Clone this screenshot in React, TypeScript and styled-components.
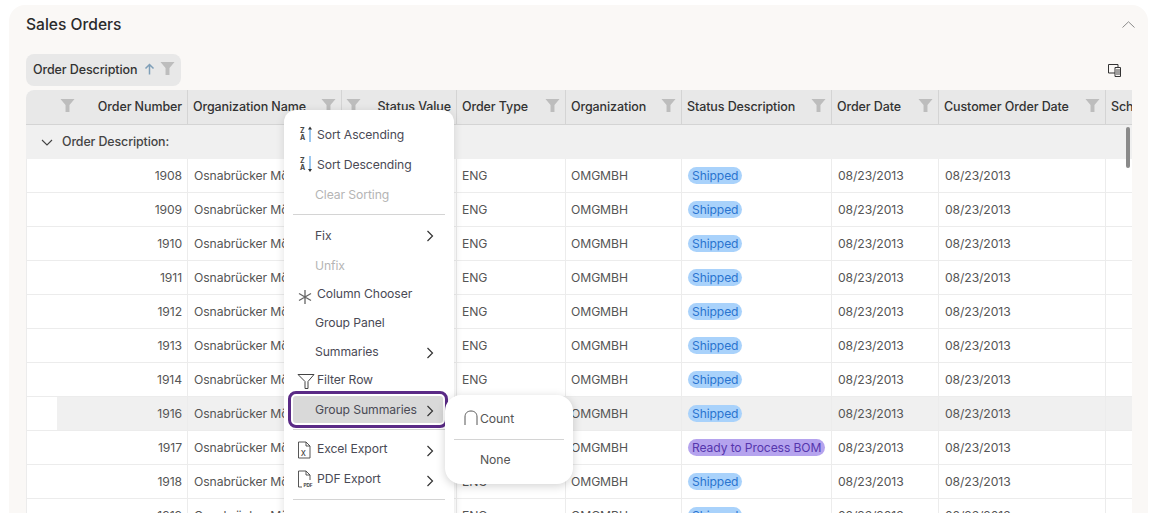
import React from 'react';
import styled, { createGlobalStyle } from 'styled-components';

const GlobalStyle = createGlobalStyle`
  html, body {
    margin: 0;
    height: 513px;
    overflow: hidden;
    background: #fff;
    font-family: Inter, "Liberation Sans", sans-serif;
  }
  * { box-sizing: border-box; }
`;

const COLUMNS = '162px 154px 115px 109px 116px 150px 107px 167px 60px';

const Page = styled.div`
  position: relative;
  width: 1149px;
  height: 513px;
  overflow: hidden;
  padding: 5px 0 0 9px;
`;

const Panel = styled.section`
  width: 1139px;
  height: 520px;
  background: #faf8f6;
  border-radius: 16px 16px 0 0;
  padding: 0 16px 0 17px;
`;

const PanelHeader = styled.header`
  height: 49px;
  padding-bottom: 10px;
  display: flex;
  align-items: center;
  justify-content: space-between;
`;

const Title = styled.h2`
  margin: 0;
  font-size: 15.6px;
  font-weight: 500;
  color: #2b2b2b;
`;

const Collapse = styled.svg`
  width: 13px;
  height: 7px;
  margin-right: -3px;
  margin-top: -1px;
`;

const Toolbar = styled.div`
  height: 36px;
  display: flex;
  align-items: flex-start;
  justify-content: space-between;
`;

const GroupChip = styled.div`
  width: 155px;
  height: 32px;
  background: #e8e8e8;
  border-radius: 8px;
  padding: 0 6px 2px 7px;
  display: flex;
  align-items: center;
  font-size: 12.5px;
  font-weight: 500;
  letter-spacing: -0.1px;
  color: #333;
`;

const ChipLabel = styled.span`
  flex: 1;
  white-space: nowrap;
`;

const ChooserIcon = styled.svg`
  width: 13px;
  height: 13px;
  margin: 10px 11px 0 0;
`;

const Grid = styled.div`
  position: relative;
  width: 1106px;
  height: 430px;
  overflow: hidden;
  border-radius: 8px 0 0 0;
  background: #fff;
`;

const HeaderRow = styled.div`
  display: grid;
  grid-template-columns: ${COLUMNS};
  height: 35px;
  background: #e8e8e8;
  border-bottom: 1px solid #d4d4d4;
`;

const HeaderCell = styled.div<{ $reverse?: boolean; $indent?: number }>`
  display: flex;
  align-items: center;
  justify-content: space-between;
  flex-direction: ${({ $reverse }) => ($reverse ? 'row-reverse' : 'row')};
  padding: 0 5px 2px ${({ $indent }) => $indent ?? 5}px;
  border-right: 1px solid #d4d4d4;
  font-size: 12.5px;
  font-weight: 500;
  letter-spacing: -0.1px;
  color: #333;
  white-space: nowrap;
  overflow: hidden;
`;

const HeaderLabel = styled.span<{ $grow?: boolean }>`
  flex: ${({ $grow }) => ($grow ? 1 : 'none')};
`;

const Funnel = styled.svg`
  flex: none;
  width: 15px;
  height: 15px;
  margin-top: -2px;
`;

const ChipSort = styled.svg`
  flex: none;
  width: 11px;
  height: 12px;
  margin-right: 5px;
`;

const GroupRow = styled.div`
  height: 34px;
  background: #f0f0f0;
  display: flex;
  align-items: center;
  gap: 9px;
  padding: 0 0 2px 15px;
  font-size: 12.4px;
  font-weight: 500;
  letter-spacing: -0.1px;
  color: #444;
`;

const GroupChevron = styled.svg`
  width: 12px;
  height: 7px;
  margin-top: 2px;
`;

const Row = styled.div<{ $hover?: boolean }>`
  display: grid;
  grid-template-columns: ${COLUMNS};
  height: 34px;
  border-bottom: 1px solid #ececec;
  box-shadow: inset 1px 0 #ececec;
  background: ${({ $hover }) =>
    $hover ? 'linear-gradient(90deg, #fff 31px, #f0f0f0 31px)' : '#fff'};
`;

const Cell = styled.div<{ $numeric?: boolean; $tight?: boolean }>`
  display: flex;
  align-items: center;
  justify-content: ${({ $numeric }) => ($numeric ? 'flex-end' : 'flex-start')};
  padding: 0 5px 0 ${({ $tight }) => ($tight ? 5 : 6)}px;
  border-right: 1px solid #ececec;
  font-size: 12.2px;
  letter-spacing: -0.1px;
  color: #555;
  white-space: nowrap;
  overflow: hidden;
`;

const StatusPill = styled.span<{ $tone: 'blue' | 'purple' }>`
  height: 17px;
  line-height: 17px;
  padding: 0 4px;
  border-radius: 9px;
  font-size: 12.1px;
  letter-spacing: -0.1px;
  background: ${({ $tone }) => ($tone === 'blue' ? '#a9d2fb' : '#b5a3ee')};
  color: ${({ $tone }) => ($tone === 'blue' ? '#2a74cf' : '#5636ad')};
`;

const ScrollThumb = styled.div`
  position: absolute;
  top: 37px;
  right: 2px;
  width: 4px;
  height: 41px;
  border-radius: 2px;
  background: #8a8a8a;
`;

const Menu = styled.div`
  position: absolute;
  left: 284px;
  top: 110px;
  width: 170px;
  height: 420px;
  background: #fff;
  border-radius: 12px;
  padding: 9px 0 0;
  box-shadow: 0 2px 10px rgba(0, 0, 0, 0.12);
`;

const MenuItem = styled.div<{ $h?: number; $disabled?: boolean; $plain?: boolean }>`
  height: ${({ $h }) => $h ?? 30}px;
  display: flex;
  align-items: center;
  position: relative;
  padding-left: ${({ $plain }) => ($plain ? 31 : 33)}px;
  font-size: 12.2px;
  letter-spacing: -0.1px;
  color: ${({ $disabled }) => ($disabled ? '#b5b5b5' : '#4a4a55')};
  white-space: nowrap;
`;

const FocusedItem = styled(MenuItem)`
  margin: 3px 11px 0 9px;
  padding-left: 22px;
  height: 27px;
  border-radius: 3px;
  background: #d9d9d9;
  outline: 3px solid #5a2a86;
  outline-offset: 2px;
`;

const ItemIcon = styled.svg<{ $dy?: number }>`
  position: absolute;
  left: 13px;
  top: calc(50% + ${({ $dy }) => $dy ?? 0}px);
  transform: translateY(-50%);
  width: 18px;
  height: 18px;
`;

const Caret = styled.svg<{ $right?: number; $dy?: number }>`
  position: absolute;
  right: ${({ $right }) => $right ?? 20}px;
  top: calc(50% + ${({ $dy }) => $dy ?? 1}px);
  transform: translateY(-50%);
  width: 8px;
  height: 12px;
`;

const MenuDivider = styled.div<{ $top?: number; $bottom?: number }>`
  height: 1px;
  margin: ${({ $top }) => $top ?? 5}px 9px ${({ $bottom }) => $bottom ?? 5}px;
  background: #d4d4d4;
`;

const SubMenu = styled.div`
  position: absolute;
  left: 445px;
  top: 395px;
  width: 128px;
  height: 89px;
  background: #fff;
  border-radius: 16px;
  padding: 8px 9px 0;
  box-shadow: 0 2px 10px rgba(0, 0, 0, 0.18);
`;

const SubItem = styled.div`
  height: 30px;
  display: flex;
  align-items: center;
  padding-left: 26px;
  position: relative;
  font-size: 12.2px;
  letter-spacing: -0.1px;
  color: #555;
`;

const SubIcon = styled.svg`
  position: absolute;
  left: 10px;
  top: 6px;
  width: 14px;
  height: 18px;
`;

const SubDivider = styled.div`
  height: 1px;
  margin: 6px 0 4px;
  background: #d4d4d4;
`;

const FilterIcon = () => (
  <Funnel viewBox="0 0 15 16">
    <path d="M0 1H15L9.6 7.5V15H5.4V7.5Z" fill="#bdbdbd" />
  </Funnel>
);

const CaretPath = () => (
  <path d="M1.5 1L6.5 6L1.5 11" fill="none" stroke="#333" strokeWidth="1.2" />
);

const SortIcon = ({ up }: { up: boolean }) => (
  <ItemIcon viewBox="0 0 18 18">
    <text x="3" y="7.5" fontSize="7" fontWeight="700" fontFamily="Inter" fill="#444">Z</text>
    <text x="3" y="15" fontSize="7" fontWeight="700" fontFamily="Inter" fill="#444">A</text>
    <path d={up ? 'M13 3V17' : 'M13 1V15'} stroke="#5aa3e6" strokeWidth="1.2" />
    <path d={up ? 'M11 4.5L13 1.5L15 4.5Z' : 'M11 14L13 17L15 14Z'} fill="#333" />
  </ItemIcon>
);

const headers = [
  { label: 'Order Number', numeric: true, indent: 34 },
  { label: 'Organization Name' },
  { label: 'Status Value', numeric: true, indent: 4 },
  { label: 'Order Type' },
  { label: 'Organization' },
  { label: 'Status Description' },
  { label: 'Order Date' },
  { label: 'Customer Order Date' },
  { label: 'Schedule Date', noFilter: true },
];

const orders: { id: number; status?: 'bom'; hover?: boolean }[] = [
  { id: 1908 },
  { id: 1909 },
  { id: 1910 },
  { id: 1911 },
  { id: 1912 },
  { id: 1913 },
  { id: 1914 },
  { id: 1916, hover: true },
  { id: 1917, status: 'bom' },
  { id: 1918 },
  { id: 1919 },
];

export default function App() {
  return (
    <Page>
      <GlobalStyle />
      <Panel>
        <PanelHeader>
          <Title>Sales Orders</Title>
          <Collapse viewBox="0 0 13 7">
            <path d="M.5 6.5L6.5 .8L12.5 6.5" fill="none" stroke="#8a8a8a" strokeWidth="1" />
          </Collapse>
        </PanelHeader>
        <Toolbar>
          <GroupChip>
            <ChipLabel>Order Description</ChipLabel>
            <ChipSort viewBox="0 0 11 12">
              <path d="M5.5 1.5V11.5M1.5 5.5L5.5 1.5L9.5 5.5" fill="none" stroke="#7f9fb8" strokeWidth="1.5" />
            </ChipSort>
            <FilterIcon />
          </GroupChip>
          <ChooserIcon viewBox="0 0 13 13">
            <path d="M.5 .5H10V9H.5Z" fill="none" stroke="#333" strokeWidth="1" />
            <path d="M7 3.5H12.5V12.5H7Z" fill="#faf8f6" stroke="#333" strokeWidth="1" />
            <path d="M8 6H12M8 8H12M8 10H12" stroke="#333" strokeWidth="0.9" />
          </ChooserIcon>
        </Toolbar>
        <Grid>
          <HeaderRow>
            {headers.map((h) => (
              <HeaderCell key={h.label} $reverse={!h.numeric && !h.noFilter} $indent={h.indent}>
                {!h.noFilter && <FilterIcon />}
                <HeaderLabel $grow={!h.numeric}>{h.label}</HeaderLabel>
              </HeaderCell>
            ))}
          </HeaderRow>
          <GroupRow>
            <GroupChevron viewBox="0 0 12 7">
              <path d="M1 1L6 6L11 1" fill="none" stroke="#444" strokeWidth="1.1" />
            </GroupChevron>
            Order Description:
          </GroupRow>
          {orders.map((o) => (
            <Row key={o.id} $hover={o.hover}>
              <Cell $numeric>{o.id}</Cell>
              <Cell>Osnabrücker Möbel</Cell>
              <Cell $numeric />
              <Cell $tight>ENG</Cell>
              <Cell $tight>OMGMBH</Cell>
              <Cell>
                <StatusPill $tone={o.status === 'bom' ? 'purple' : 'blue'}>
                  {o.status === 'bom' ? 'Ready to Process BOM' : 'Shipped'}
                </StatusPill>
              </Cell>
              <Cell>08/23/2013</Cell>
              <Cell>08/23/2013</Cell>
              <Cell />
            </Row>
          ))}
          <ScrollThumb />
        </Grid>
      </Panel>

      <Menu>
        <MenuItem>
          <SortIcon up />
          Sort Ascending
        </MenuItem>
        <MenuItem>
          <SortIcon up={false} />
          Sort Descending
        </MenuItem>
        <MenuItem $disabled $plain>Clear Sorting</MenuItem>
        <MenuDivider />
        <MenuItem $plain>
          Fix
          <Caret viewBox="0 0 8 12"><CaretPath /></Caret>
        </MenuItem>
        <MenuItem $plain $disabled>Unfix</MenuItem>
        <MenuItem $h={27}>
          <ItemIcon $dy={3} viewBox="0 0 18 18">
            <path d="M8 2V16M2 5.5L14 12.5M14 5.5L2 12.5" stroke="#666" strokeWidth="1.3" />
          </ItemIcon>
          Column Chooser
        </MenuItem>
        <MenuItem $plain $h={31}>Group Panel</MenuItem>
        <MenuItem $plain $h={27}>
          Summaries
          <Caret viewBox="0 0 8 12"><CaretPath /></Caret>
        </MenuItem>
        <MenuItem $h={28}>
          <ItemIcon $dy={2} viewBox="0 0 18 18">
            <path d="M1 2.5H17L11 9.5V16.5H8V9.5Z" fill="none" stroke="#444" strokeWidth="1" />
          </ItemIcon>
          Filter Row
        </MenuItem>
        <FocusedItem>
          Group Summaries
          <Caret $right={9} viewBox="0 0 8 12"><CaretPath /></Caret>
        </FocusedItem>
        <MenuDivider $top={6} $bottom={3} />
        <MenuItem>
          <ItemIcon $dy={2} viewBox="0 0 18 18">
            <path d="M1.5 1H9L13 5V17H1.5Z M9 1V5H13" fill="none" stroke="#444" strokeWidth="0.9" />
            <text x="3.8" y="14.5" fontSize="9.5" fontFamily="Inter" fill="#444">x</text>
          </ItemIcon>
          Excel Export
          <Caret $dy={3} viewBox="0 0 8 12"><CaretPath /></Caret>
        </MenuItem>
        <MenuItem>
          <ItemIcon $dy={1} viewBox="0 0 18 18">
            <path d="M5 17H1.5V1H9L13 5V10 M9 1V5H13" fill="none" stroke="#444" strokeWidth="0.9" />
            <text x="6.4" y="16.5" fontSize="4.8" fontWeight="700" fontFamily="Inter" fill="#444">PDF</text>
          </ItemIcon>
          PDF Export
          <Caret $dy={3} viewBox="0 0 8 12"><CaretPath /></Caret>
        </MenuItem>
        <MenuDivider $top={6} />
      </Menu>

      <SubMenu>
        <SubItem>
          <SubIcon viewBox="0 0 14 18">
            <path d="M1 16V8C1 4 3.5 2 7 2C10.5 2 13 4 13 8V16" fill="none" stroke="#555" strokeWidth="1" />
          </SubIcon>
          Count
        </SubItem>
        <SubDivider />
        <SubItem>None</SubItem>
      </SubMenu>
    </Page>
  );
}
